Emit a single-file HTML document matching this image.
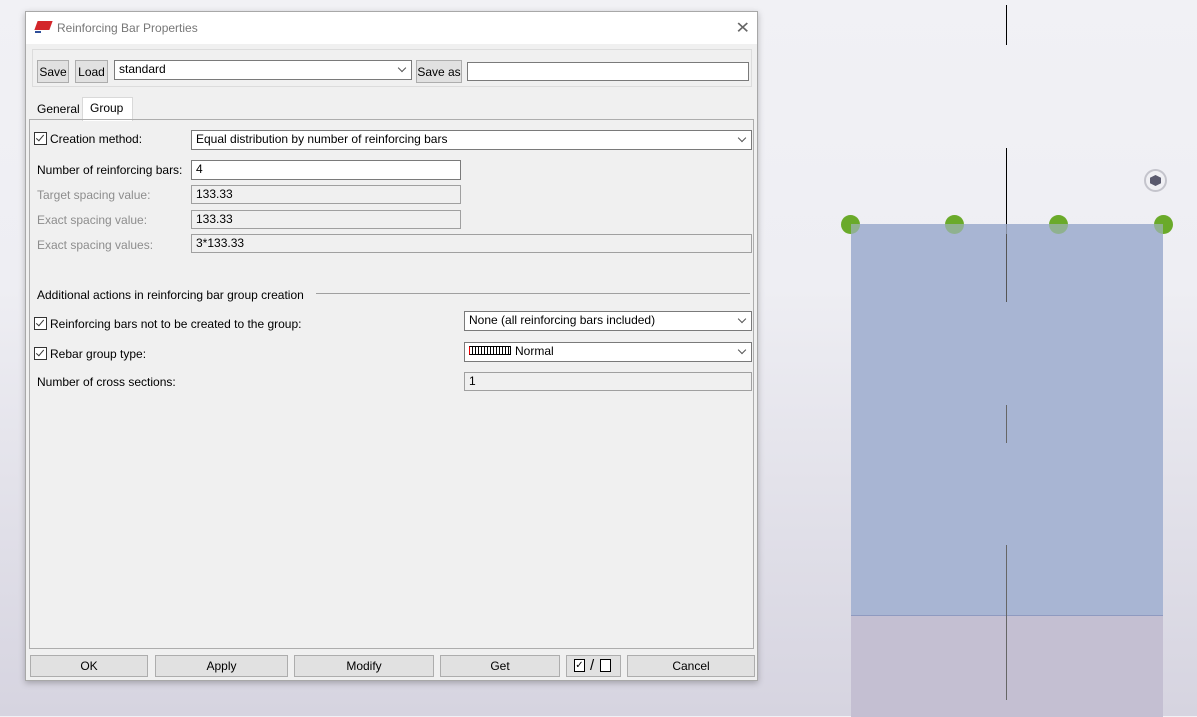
<!DOCTYPE html><html><head><style>
body{margin:0;width:1197px;height:716px;overflow:hidden;position:relative;background:linear-gradient(#f1f1f5,#eeeef3 40%,#d6d4e0);font-family:"Liberation Sans",sans-serif;font-size:12px;color:#000}
.a{position:absolute}
.dlg{left:25px;top:11px;width:731px;height:668px;background:#f0f0f0;border:1px solid #a8a8a8;box-shadow:0 2px 6px rgba(0,0,0,.25)}
.btn{position:absolute;background:#e1e1e1;border:1px solid #adadad;box-sizing:border-box;text-align:center;line-height:20px}
.inp{position:absolute;background:#fff;border:1px solid #7a7a7a;box-sizing:border-box;padding-left:4px;line-height:17px}
.ro{background:#f0f0f0;border-color:#a0a0a0}
.lbl{position:absolute}
.dis{color:#8d8d8d}
.cb{position:absolute;width:11px;height:11px;border:1px solid #333;background:#fff}
.cb:after{content:"";position:absolute;left:3px;top:0px;width:3px;height:7px;border:solid #333;border-width:0 1.3px 1.3px 0;transform:rotate(40deg)}
.dd:after{content:"";position:absolute;right:6px;top:4px;width:5px;height:5px;border:solid #555;border-width:0 1px 1px 0;transform:rotate(45deg)}
</style></head><body>
<div class="a" style="left:1006px;top:5px;width:1px;height:40px;background:#000"></div>
<div class="a" style="left:851px;top:224px;width:312px;height:492px;background:#a8b5d3"></div>
<div class="a" style="left:851px;top:615px;width:312px;height:101px;background:#c4bfd2;border-top:1px solid #8f9ac0"></div>
<div class="a" style="left:1006px;top:148px;width:1px;height:76px;background:#000"></div>
<div class="a" style="left:1006px;top:224px;width:1px;height:78px;background:#555"></div>
<div class="a" style="left:1006px;top:405px;width:1px;height:38px;background:#666"></div>
<div class="a" style="left:1006px;top:545px;width:1px;height:155px;background:#666"></div>
<div class="a" style="left:841px;top:215px;width:19px;height:19px;border-radius:50%;background:#6aaa2a"></div>
<div class="a" style="left:945px;top:215px;width:19px;height:19px;border-radius:50%;background:#6aaa2a"></div>
<div class="a" style="left:1049px;top:215px;width:19px;height:19px;border-radius:50%;background:#6aaa2a"></div>
<div class="a" style="left:1154px;top:215px;width:19px;height:19px;border-radius:50%;background:#6aaa2a"></div>
<div class="a" style="left:851px;top:224px;width:312px;height:10px;background:rgba(168,181,211,.6)"></div>
<div class="a" style="left:1144px;top:169px;width:23px;height:23px;border-radius:50%;border:2px solid #c4c4cc;box-sizing:border-box;background:#f0f0f4"></div>
<div class="a" style="left:1150px;top:175px;width:11px;height:11px;background:#5a5a6e;border-radius:2px;clip-path:polygon(50% 0,100% 25%,100% 75%,50% 100%,0 75%,0 25%)"></div>

<div class="a dlg">
 <div class="a" style="left:0;top:0;width:731px;height:32px;background:#fff"></div>
 <div class="a" style="left:10px;top:9px;width:15px;height:9px;background:#d3262a;transform:skewX(-20deg)"></div>
 <div class="a" style="left:9px;top:19px;width:6px;height:2px;background:#2f4f9a"></div>
 <div class="lbl" style="left:31px;top:9px;color:#777;font-size:12px">Reinforcing Bar Properties</div>
 <div class="lbl" style="left:710px;top:6px;color:#666;font-size:16px;font-weight:100;transform:scale(1.1,1)">✕</div>
 <div class="a" style="left:6px;top:37px;width:720px;height:38px;border:1px solid #dcdcdc;box-sizing:border-box"></div>
 <div class="btn" style="left:11px;top:48px;width:32px;height:23px;line-height:22px">Save</div>
 <div class="btn" style="left:49px;top:48px;width:33px;height:23px;line-height:22px">Load</div>
 <div class="inp dd" style="left:88px;top:48px;width:298px;height:20px">standard</div>
 <div class="btn" style="left:390px;top:48px;width:46px;height:23px;line-height:22px">Save as</div>
 <div class="inp" style="left:441px;top:50px;width:282px;height:19px"></div>
 <div class="lbl" style="left:11px;top:90px">General</div>
 <div class="a" style="left:56px;top:85px;width:49px;height:23px;background:#fff;border:1px solid #d9d9d9;border-bottom:none"></div>
 <div class="lbl" style="left:64px;top:89px">Group</div>
 <div class="a" style="left:3px;top:107px;width:725px;height:530px;border:1px solid #adadad;box-sizing:border-box"></div>
 <div class="cb" style="left:8px;top:120px"></div>
 <div class="lbl" style="left:24px;top:120px">Creation method:</div>
 <div class="inp dd" style="left:165px;top:118px;width:561px;height:20px">Equal distribution by number of reinforcing bars</div>
 <div class="lbl" style="left:11px;top:151px">Number of reinforcing bars:</div>
 <div class="inp" style="left:165px;top:148px;width:270px;height:20px">4</div>
 <div class="lbl dis" style="left:11px;top:176px">Target spacing value:</div>
 <div class="inp ro" style="left:165px;top:173px;width:270px;height:19px">133.33</div>
 <div class="lbl dis" style="left:11px;top:201px">Exact spacing value:</div>
 <div class="inp ro" style="left:165px;top:198px;width:270px;height:19px">133.33</div>
 <div class="lbl dis" style="left:11px;top:226px">Exact spacing values:</div>
 <div class="inp ro" style="left:165px;top:222px;width:561px;height:19px">3*133.33</div>
 <div class="lbl" style="left:11px;top:276px">Additional actions in reinforcing bar group creation</div>
 <div class="a" style="left:290px;top:281px;width:434px;height:1px;background:#a0a0a0"></div>
 <div class="cb" style="left:8px;top:305px"></div>
 <div class="lbl" style="left:24px;top:305px">Reinforcing bars not to be created to the group:</div>
 <div class="inp dd" style="left:438px;top:299px;width:288px;height:20px">None (all reinforcing bars included)</div>
 <div class="cb" style="left:8px;top:335px"></div>
 <div class="lbl" style="left:24px;top:335px">Rebar group type:</div>
 <div class="inp dd" style="left:438px;top:330px;width:288px;height:20px"><span style="display:inline-block;width:40px;height:7px;border:1px solid #000;background:repeating-linear-gradient(90deg,#fff 0 2px,#000 2px 3px);vertical-align:middle;margin:0 4px 2px 0;border-left-color:#e00"></span>Normal</div>
 <div class="lbl" style="left:11px;top:363px">Number of cross sections:</div>
 <div class="inp ro" style="left:438px;top:360px;width:288px;height:19px">1</div>
 <div class="btn" style="left:4px;top:643px;width:118px;height:22px">OK</div>
 <div class="btn" style="left:129px;top:643px;width:133px;height:22px">Apply</div>
 <div class="btn" style="left:268px;top:643px;width:140px;height:22px">Modify</div>
 <div class="btn" style="left:414px;top:643px;width:120px;height:22px">Get</div>
 <div class="btn" style="left:540px;top:643px;width:55px;height:22px"></div>
 <div class="a" style="left:548px;top:647px;width:9px;height:11px;border:1px solid #000;background:#fff;font-size:10px;line-height:11px;text-align:center">✓</div>
 <div class="a" style="left:564px;top:645px;font-size:15px">/</div>
 <div class="a" style="left:574px;top:647px;width:9px;height:11px;border:1px solid #000;background:#fff"></div>
 <div class="btn" style="left:601px;top:643px;width:128px;height:22px">Cancel</div>
</div>
</body></html>
